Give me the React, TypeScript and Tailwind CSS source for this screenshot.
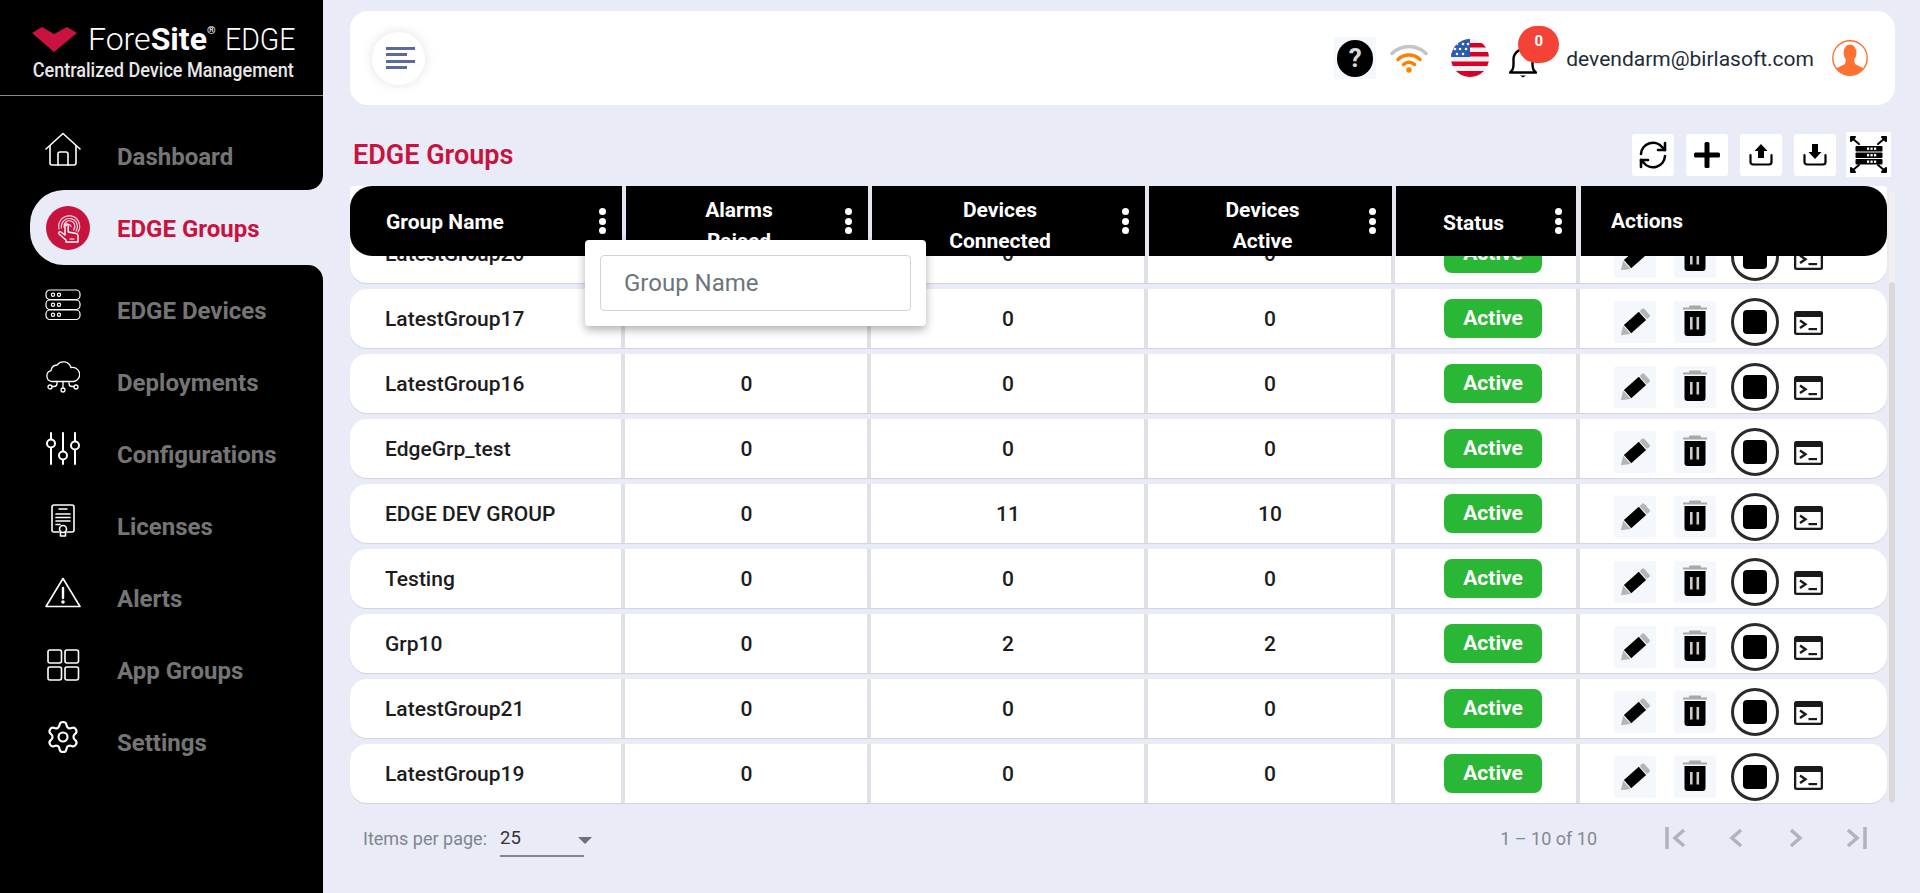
import React from "react";
import { Settings } from "lucide-react";

const BG = "bg-[#e9ebf7]";

const Logo = () => (
  <div className="h-[95px] border-b border-[#8a8a8a] box-content relative shrink-0">
    <div className="flex items-center pl-[32px] pt-[21px] h-[36px] box-content">
      <svg width="46" height="27" viewBox="0 0 46 27" className="shrink-0">
        <polygon points="0,7 10,1 22,8 35,1 45,7 22,26" fill="#c8133f" />
      </svg>
      <div className="ml-[10px] flex items-baseline text-white text-[32px] leading-[36px] whitespace-nowrap">
        <span className="font-light inline-block">Fore</span>
        <span className="font-bold inline-block">Site</span>
        <span className="text-[11px] font-bold self-start leading-[20px]">®</span>
        <span className="font-light ml-[9px] inline-block w-[68px] origin-left scale-x-[0.89]">EDGE</span>
      </div>
    </div>
    <div className="pl-[38px] mt-[1px] text-[21px] font-medium leading-[24px] text-[#e8e8e8] whitespace-nowrap origin-left scale-x-[0.86]">
      Centralized Device Management
    </div>
  </div>
);

const stroke = { fill: "none", stroke: "white", strokeWidth: 1.6, strokeLinecap: "round", strokeLinejoin: "round" } as const;

const HomeIcon = () => (
  <svg width="36" height="36" viewBox="0 0 36 36" {...stroke}>
    <path d="M1 17 18 1.5 35 17" />
    <path d="M5 14v17a2 2 0 0 0 2 2h22a2 2 0 0 0 2-2V14" />
    <path d="M13 33V22a2 2 0 0 1 2-2h6a2 2 0 0 1 2 2v11" />
  </svg>
);
const DevicesIcon = () => (
  <svg width="36" height="32" viewBox="0 0 36 32" {...stroke} strokeWidth="1.2">
    <rect x="1" y="1" width="34" height="9.5" rx="4" />
    <rect x="1" y="11" width="34" height="9.5" rx="4" />
    <rect x="1" y="21" width="34" height="9.5" rx="4" />
    {[5.7, 15.7, 25.7].map((y) => (
      <g key={y}>
        <circle cx="8" cy={y} r="1.6" />
        <circle cx="14" cy={y} r="1.6" />
      </g>
    ))}
  </svg>
);
const CloudIcon = () => (
  <svg width="34" height="32" viewBox="0 0 34 32" {...stroke} strokeWidth="1.3">
    <path d="M7 20.500H6a5.500 5.500 0 0 1-1-10.800A6.500 6.500 0 0 1 11 4a8 8 0 0 1 14 2.500 7 7 0 0 1 3 14H7z" />
    <path d="M17 20.500v6M11 20.500v2a3 3 0 0 1-3 3H6M23 20.500v2a3 3 0 0 0 3 3h2" />
    <circle cx="4" cy="26" r="2" />
    <circle cx="17" cy="29" r="2" />
    <circle cx="30" cy="26" r="2" />
  </svg>
);
const SlidersIcon = () => (
  <svg width="34" height="33" viewBox="0 0 34 33" {...stroke} strokeWidth="2">
    <path d="M5 1v6M5 16v16M17 1v18M17 28v4M29 1v8M29 18v14" />
    <circle cx="5" cy="11.500" r="4" />
    <circle cx="17" cy="23.500" r="4" />
    <circle cx="29" cy="13.500" r="4" />
  </svg>
);
const LicenseIcon = () => (
  <svg width="26" height="33" viewBox="0 0 26 33" {...stroke}>
    <path d="M9 28H4a2 2 0 0 1-2-2V3a2 2 0 0 1 2-2h18a2 2 0 0 1 2 2v23a2 2 0 0 1-2 2h-5" />
    <path d="M9 5h8M6 10h14M6 13.500h14M6 17h14M6 20.500h4" />
    <circle cx="13" cy="25" r="3.500" />
    <path d="M10.500 28v4h5v-4" />
  </svg>
);
const AlertIcon = () => (
  <svg width="36" height="31" viewBox="0 0 36 31" {...stroke}>
    <path d="M18 1.500 35 29.500H1L18 1.500z" />
    <path d="M18 11v10" strokeWidth="2.400" />
    <circle cx="18" cy="25" r="1" fill="white" />
  </svg>
);
const GridIcon = () => (
  <svg width="33" height="32" viewBox="0 0 33 32" {...stroke}>
    <rect x="1" y="1" width="13.500" height="13" rx="2" />
    <rect x="18" y="1" width="13.500" height="13" rx="2" />
    <rect x="1" y="18" width="13.500" height="13" rx="2" />
    <rect x="18" y="18" width="13.500" height="13" rx="2" />
  </svg>
);
const TouchIcon = () => (
  <svg width="44" height="44" viewBox="0 0 44 44" className="shrink-0">
    <circle cx="22" cy="22" r="22" fill="#c8133f" />
    <g fill="none" stroke="#f7d9e0" strokeWidth="1.200" strokeLinecap="round" strokeLinejoin="round">
      <path d="M13 23a10.500 10.500 0 1 1 19 3" />
      <path d="M15.500 22a8 8 0 1 1 14.500 3" />
      <path d="M18 21a5.500 5.500 0 1 1 9.500 3" />
      <path d="M20.500 19.500a2.500 2.500 0 0 1 4.500 1" />
      <path d="M20 36v-2l-7-6c-1-1.500.5-3 2-2l4 3V19.500a1.600 1.600 0 0 1 3.200 0V26l8 1.500c1.200.3 1.800 1 1.800 2.200V36H20z" stroke="white" strokeWidth="1.400" />
      <path d="M24 33h4" stroke="white" />
    </g>
  </svg>
);

const nav: [string, React.ReactNode][] = [
  ["EDGE Devices", <DevicesIcon />],
  ["Deployments", <CloudIcon />],
  ["Configurations", <SlidersIcon />],
  ["Licenses", <LicenseIcon />],
  ["Alerts", <AlertIcon />],
  ["App Groups", <GridIcon />],
  ["Settings", <Settings size={38} strokeWidth={1.45} color="white" />],
];

const NavRow = ({ label, icon, first }: { label: string; icon: React.ReactNode; first?: boolean }) => (
  <div className="h-[72px] flex items-center pl-[45px]">
    <div className="w-[36px] flex justify-center mb-[9px]">{icon}</div>
    <span className={`ml-[36px] text-[24px] font-bold text-[#757575] whitespace-nowrap ${first ? "pt-[6px]" : "pt-[4px]"}`}>{label}</span>
  </div>
);

const Sidebar = () => (
  <aside className="w-[323px] shrink-0 bg-black flex flex-col">
    <Logo />
    <nav className="flex flex-col mt-[22px]">
      <NavRow first label="Dashboard" icon={<HomeIcon />} />
      <div className={`relative h-[75px] ml-[30px] ${BG} rounded-l-[34px] flex items-center pl-[16px]`}>
        <span className={`absolute right-0 -top-[15px] w-[15px] h-[15px] ${BG}`}>
          <span className="block w-full h-full bg-black rounded-br-[15px]" />
        </span>
        <span className={`absolute right-0 -bottom-[15px] w-[15px] h-[15px] ${BG}`}>
          <span className="block w-full h-full bg-black rounded-tr-[15px]" />
        </span>
        <TouchIcon />
        <span className="ml-[27px] pt-[3px] text-[24px] font-bold text-[#c8133f] whitespace-nowrap">EDGE Groups</span>
      </div>
      <div className="mt-[8px]">
        {nav.map(([l, i]) => (
          <NavRow key={l} label={l} icon={i} />
        ))}
      </div>
    </nav>
  </aside>
);

const Flag = () => (
  <svg width="38" height="38" viewBox="0 0 38 38">
    <defs>
      <clipPath id="fc">
        <circle cx="19" cy="19" r="19" />
      </clipPath>
    </defs>
    <g clipPath="url(#fc)">
      <rect width="38" height="38" fill="#eef0f2" />
      <rect y="4" width="38" height="4.500" fill="#d80027" />
      <rect y="13" width="38" height="4.500" fill="#d80027" />
      <rect y="22.500" width="38" height="4.500" fill="#d80027" />
      <rect y="32" width="38" height="6" fill="#d80027" />
      <rect width="19" height="18" fill="#2a5bb0" />
      {[
        [6, 5], [12, 5], [17, 5], [4, 10], [9, 10], [15, 10], [6, 15], [12, 15],
      ].map(([x, y]) => (
        <circle key={`${x}-${y}`} cx={x} cy={y} r="1.300" fill="white" />
      ))}
    </g>
  </svg>
);

const Wifi = () => (
  <svg width="38" height="30" viewBox="0 0 38 30" fill="none" strokeLinecap="round">
    <path d="M2 10.500a24 24 0 0 1 34 0" stroke="#c4c4c4" strokeWidth="3.500" />
    <path d="M8 16.500a15.500 15.500 0 0 1 22 0" stroke="#ff7f00" strokeWidth="3.500" />
    <path d="M13.500 21.500a8 8 0 0 1 11 0" stroke="#ff7f00" strokeWidth="3.500" />
    <circle cx="19" cy="27" r="2.700" fill="#ff7f00" />
  </svg>
);

const Bell = () => (
  <svg width="28" height="30" viewBox="0 0 28 30" fill="none" stroke="black" strokeWidth="2.400" strokeLinejoin="round">
    <path d="M1 24.500c3-2 3.500-4 3.500-8V11a9.500 9.500 0 0 1 19 0v5.500c0 4 .5 6 3.500 8H1z" />
    <path d="M11 27.500h6l-3 2z" fill="black" stroke="none" />
  </svg>
);

const Avatar = () => (
  <svg width="36" height="36" viewBox="0 0 36 36">
    <defs>
      <clipPath id="ac">
        <circle cx="18" cy="18" r="17" />
      </clipPath>
    </defs>
    <circle cx="18" cy="18" r="17.200" fill="white" stroke="#ff7033" strokeWidth="1.400" />
    <g clipPath="url(#ac)" fill="#ff7033">
      <ellipse cx="18" cy="13" rx="6.500" ry="8.500" />
      <path d="M14 19h8l1 5 8 4 2 8H3l2-8 8-4z" />
    </g>
  </svg>
);

const TopBar = () => (
  <header className="h-[94px] shrink-0 bg-white rounded-[18px] flex items-center">
    <button className="ml-[22px] w-[53px] h-[53px] rounded-full bg-white shadow-[0_0_12px_rgba(0,0,0,0.12)] flex flex-col justify-center gap-[3.500px] pl-[14px]">
      <span className="block w-[29px] h-[3px] bg-[#5a6a9c]" />
      <span className="block w-[21px] h-[3px] bg-[#5a6a9c]" />
      <span className="block w-[29px] h-[3px] bg-[#5a6a9c]" />
      <span className="block w-[21px] h-[3px] bg-[#5a6a9c]" />
    </button>
    <div className="ml-auto flex items-center">
      <div className="w-[42px] h-[42px] bg-[#f4f7fb] rounded-[3px] flex items-center justify-center">
        <span className="w-[36px] h-[37px] rounded-full bg-black text-[#d8d8d8] font-bold text-[26px] flex items-center justify-center">?</span>
      </div>
      <div className="ml-[14px]"><Wifi /></div>
      <div className="ml-[23px]"><Flag /></div>
      <div className="ml-[20px] relative mt-[9px]">
        <Bell />
        <span className="absolute left-[9px] -top-[22px] w-[41px] h-[37px] rounded-full bg-[#f44336] text-white text-[15px] font-bold flex items-center justify-center pb-[6px]">0</span>
      </div>
      <span className="ml-[29px] mt-[4px] text-[21px] text-[#222b36] whitespace-nowrap">devendarm@birlasoft.com</span>
      <div className="ml-[18px] mr-[27px]"><Avatar /></div>
    </div>
  </header>
);

const ToolBtn = ({ children }: { children: React.ReactNode }) => (
  <div className="w-[42px] h-[42px] bg-white rounded-[3px] flex items-center justify-center">{children}</div>
);

const Sync = () => (
  <svg width="30" height="30" viewBox="0 0 30 30" fill="none" stroke="black" strokeWidth="2.600" strokeLinecap="round" strokeLinejoin="round">
    <path d="M3 14A12 12 0 0 1 24.500 7.500L27 10" />
    <path d="M27 3v7h-7" />
    <path d="M27 16A12 12 0 0 1 5.500 22.500L3 20" />
    <path d="M3 27v-7h7" />
  </svg>
);
const Plus = () => (
  <svg width="26" height="26" viewBox="0 0 26 26" fill="black">
    <rect x="10.500" y="0" width="5" height="26" rx="1.500" />
    <rect x="0" y="10.500" width="26" height="5" rx="1.500" />
  </svg>
);
const Upload = () => (
  <svg width="24" height="23" viewBox="0 0 24 23">
    <path d="M12 1 18.500 8H15V15H9V8H5.500z" fill="black" />
    <path d="M1.500 12v7a2.500 2.500 0 0 0 2.500 2.500h16a2.500 2.500 0 0 0 2.500-2.500v-7" fill="none" stroke="black" strokeWidth="2.200" strokeLinecap="round" />
  </svg>
);
const Download = () => (
  <svg width="24" height="23" viewBox="0 0 24 23">
    <path d="M12 16 18.500 9H15V1H9V9H5.500z" fill="black" />
    <path d="M1.500 12v7a2.500 2.500 0 0 0 2.500 2.500h16a2.500 2.500 0 0 0 2.500-2.500v-7" fill="none" stroke="black" strokeWidth="2.200" strokeLinecap="round" />
  </svg>
);
const Rack = () => (
  <svg width="45" height="45" viewBox="0 0 45 45" className="bg-white">
    {[14, 20.500, 27].map((y) => (
      <g key={y}>
        <rect x="9.500" y={y} width="27" height="5.500" rx="1" fill="black" />
        <rect x="21" y={y + 1.5} width="2.200" height="2.400" fill="white" />
        <rect x="24.500" y={y + 1.5} width="2.200" height="2.400" fill="white" />
        <rect x="28" y={y + 1.5} width="2.200" height="2.400" fill="white" />
      </g>
    ))}
    <g stroke="black" strokeWidth="2" fill="black" strokeLinejoin="round" strokeLinecap="round">
      <path d="M7 7l6 5M38 7l-6 5M7 38l6-5M38 38l-6-5" fill="none" />
      <path d="M5 9V5h4zM40 9V5h-4zM5 36v4h4zM40 36v4h-4z" />
    </g>
  </svg>
);

const Kebab = () => (
  <span className="w-[8px] shrink-0 flex flex-col gap-[2.500px] items-center">
    <i className="block w-[7px] h-[7px] rounded-full bg-white" />
    <i className="block w-[7px] h-[7px] rounded-full bg-white" />
    <i className="block w-[7px] h-[7px] rounded-full bg-white" />
  </span>
);

const GRID = "grid grid-cols-[276px_246px_277px_247px_185px_306px]";

const HCell = ({ children, className = "" }: { children?: React.ReactNode; className?: string }) => (
  <div className={`bg-black flex items-center text-white text-[21px] font-bold leading-[31px] overflow-hidden ${className}`}>
    {children}
  </div>
);

const Head = () => (
  <div className={`${GRID} h-[70px] bg-white rounded-t-[4px] relative z-10`}>
    <HCell className="rounded-l-[22px] border-r-[4px] border-[#e4e6f1] pr-[16px] pl-[36px]">
      <span className="flex-1 pt-[2px]">Group Name</span>
      <Kebab />
    </HCell>
    <HCell className="border-r-[4px] border-[#e4e6f1] pr-[16px] pl-[8px]">
      <span className="flex-1 text-center pt-[10px]">Alarms<br />Raised</span>
      <Kebab />
    </HCell>
    <HCell className="border-r-[4px] border-[#e4e6f1] pr-[16px] pl-[7px]">
      <span className="flex-1 text-center pt-[10px]">Devices<br />Connected</span>
      <Kebab />
    </HCell>
    <HCell className="border-r-[4px] border-[#e4e6f1] pr-[16px] pl-[8px]">
      <span className="flex-1 text-center pt-[10px]">Devices<br />Active</span>
      <Kebab />
    </HCell>
    <HCell className="border-r-[5px] border-[#e4e6f1] pr-[14px]">
      <span className="flex-1 text-center pt-[4px] pr-[3px]">Status</span>
      <Kebab />
    </HCell>
    <HCell className="rounded-r-[22px] pl-[30px] pt-[1px]">Actions</HCell>
  </div>
);

const Pencil = () => (
  <svg width="42" height="42" viewBox="0 0 42 42">
    <g transform="translate(21 21.500) rotate(-42)">
      <polygon points="-19,0 -11,-5.500 -11,5.500" fill="#b5b5b5" />
      <rect x="-10" y="-5.500" width="20" height="11" fill="black" />
      <rect x="11" y="-5.500" width="5" height="11" rx="1.500" fill="#b5b5b5" />
    </g>
  </svg>
);
const Trash = () => (
  <svg width="42" height="42" viewBox="0 0 42 42">
    <rect x="9" y="6.500" width="24" height="2" fill="#a8a8a8" />
    <rect x="15" y="4.500" width="12" height="2.500" rx="1" fill="#a8a8a8" />
    <path d="M10.500 10h21v22a3 3 0 0 1-3 3h-15a3 3 0 0 1-3-3z" fill="black" />
    <rect x="16" y="16" width="2.600" height="12.500" fill="#ccc" />
    <rect x="22.500" y="16" width="2.600" height="12.500" fill="#ccc" />
  </svg>
);
const Terminal = () => (
  <svg width="29" height="24" viewBox="0 0 29 24">
    <rect width="29" height="24" rx="2.500" fill="#1a1a1a" />
    <rect x="2.300" y="6" width="24.400" height="15.700" fill="white" />
    <path d="M6 9.500l5.500 3.800-5.500 3.800" fill="none" stroke="#1a1a1a" strokeWidth="2.400" />
    <rect x="14.500" y="17" width="8.500" height="2.200" fill="#1a1a1a" />
  </svg>
);

const rows: [string, string, string, string][] = [
  ["LatestGroup20", "0", "0", "0"],
  ["LatestGroup17", "0", "0", "0"],
  ["LatestGroup16", "0", "0", "0"],
  ["EdgeGrp_test", "0", "0", "0"],
  ["EDGE DEV GROUP", "0", "11", "10"],
  ["Testing", "0", "0", "0"],
  ["Grp10", "0", "2", "2"],
  ["LatestGroup21", "0", "0", "0"],
  ["LatestGroup19", "0", "0", "0"],
];

const DIV = "mr-[1px] border-r-[4px] border-[#dfe0e8]";

const Row = ({ r }: { r: [string, string, string, string] }) => (
  <div className={`${GRID} h-[59px] bg-white rounded-[17px] shadow-[0_1px_1px_rgba(0,0,0,0.1)] text-[21px] font-medium text-[#1c1c1c]`}>
    <div className={`${DIV} flex items-center pl-[35px] pt-[2px] whitespace-nowrap`}>{r[0]}</div>
    <div className={`${DIV} flex items-center justify-center pt-[2px]`}>{r[1]}</div>
    <div className={`${DIV} flex items-center justify-center pt-[2px]`}>{r[2]}</div>
    <div className={`${DIV} flex items-center justify-center pt-[2px]`}>{r[3]}</div>
    <div className={`${DIV} flex items-center justify-center pl-[14px]`}>
      <span className="w-[98px] h-[39px] rounded-[8px] bg-[#2ab736] text-white font-bold text-[21px] flex items-center justify-center pt-[1px]">Active</span>
    </div>
    <div className="flex items-center pl-[33px] pt-[7px]">
      <div className="w-[42px] h-[42px] rounded-[3px] bg-[#f4f7fb]"><Pencil /></div>
      <div className="ml-[18px] w-[42px] h-[42px] rounded-[3px] bg-[#f4f7fb]"><Trash /></div>
      <div className="ml-[15px] w-[48px] h-[48px] rounded-full border-[3px] border-[#2a2a2a] flex items-center justify-center">
        <span className="block w-[24px] h-[24px] rounded-[4px] bg-black" />
      </div>
      <div className="ml-[15px] mt-[1px]"><Terminal /></div>
    </div>
  </div>
);

const PageBtn = ({ d }: { d: string }) => (
  <svg width="22" height="22" viewBox="0 0 22 22" fill="none" stroke="#b0b3bb" strokeWidth="3.500">
    <path d={d} />
  </svg>
);

const Footer = () => (
  <div className="h-[70px] w-[1537px] flex items-center">
    <span className="ml-[13px] text-[18px] text-[#80858f]">Items per page:</span>
    <div className="ml-[13px] w-[84px] h-[36px] border-b-[2px] border-[#85858f] relative text-[18.500px] text-[#333] leading-[34px] mt-[1px]">
      25
      <span className="absolute right-[-8px] top-[16px] w-0 h-0 border-l-[7px] border-r-[7px] border-t-[7px] border-l-transparent border-r-transparent border-t-[#6f6f76]" />
    </div>
    <span className="ml-auto text-[18px] text-[#85888f]">1 – 10 of 10</span>
    <div className="ml-[68px] mr-[20px] flex items-center gap-[38px]">
      <PageBtn d="M2 0v22M19 3 10 11l9 8" />
      <PageBtn d="M16 3 7 11l9 8" />
      <PageBtn d="M6 3l9 8-9 8" />
      <PageBtn d="M3 3l9 8-9 8M20 0v22" />
    </div>
  </div>
);

export default function App() {
  return (
    <div className={`flex h-[893px] w-[1920px] overflow-hidden ${BG} font-[family-name:Roboto,sans-serif]`}>
      <Sidebar />
      <main className="flex-1 min-w-0 pl-[27px] pr-[25px] pt-[11px] flex flex-col">
        <TopBar />
        <div className="w-[1541px] mt-[27px] h-[45px] flex items-center shrink-0">
          <h1 className="ml-[3px] pt-[1px] text-[27px] font-semibold text-[#c8133f]">EDGE Groups</h1>
          <div className="ml-auto flex items-center gap-[12px]">
            <ToolBtn><Sync /></ToolBtn>
            <ToolBtn><Plus /></ToolBtn>
            <ToolBtn><Upload /></ToolBtn>
            <ToolBtn><Download /></ToolBtn>
            <div className="-ml-[2px]"><Rack /></div>
          </div>
        </div>
        <div className="mt-[9px] flex items-start relative">
          <div className="w-[1537px] shrink-0">
            <Head />
            <div className="flex flex-col gap-[6px] -mt-[32px]">
              {rows.map((r) => (
                <Row key={r[0]} r={r} />
              ))}
            </div>
            <div className="absolute z-20 left-[235px] top-[54px] w-[341px] h-[86px] bg-white rounded-[4px] shadow-[0_4px_10px_rgba(0,0,0,0.3)] p-[15px]">
              <div className="h-[56px] border border-[#ced4da] rounded-[4px] flex items-center pl-[23px] text-[24px] text-[#6c757d]">
                Group Name
              </div>
            </div>
          </div>
          <div className="ml-[2px] mt-[6px] w-[9px] h-[611px] bg-[#f1f1f1] flex flex-col justify-end">
            <div className="h-[521px] bg-[#d9d9d9] rounded-[5px]" />
          </div>
        </div>
        <Footer />
      </main>
    </div>
  );
}
